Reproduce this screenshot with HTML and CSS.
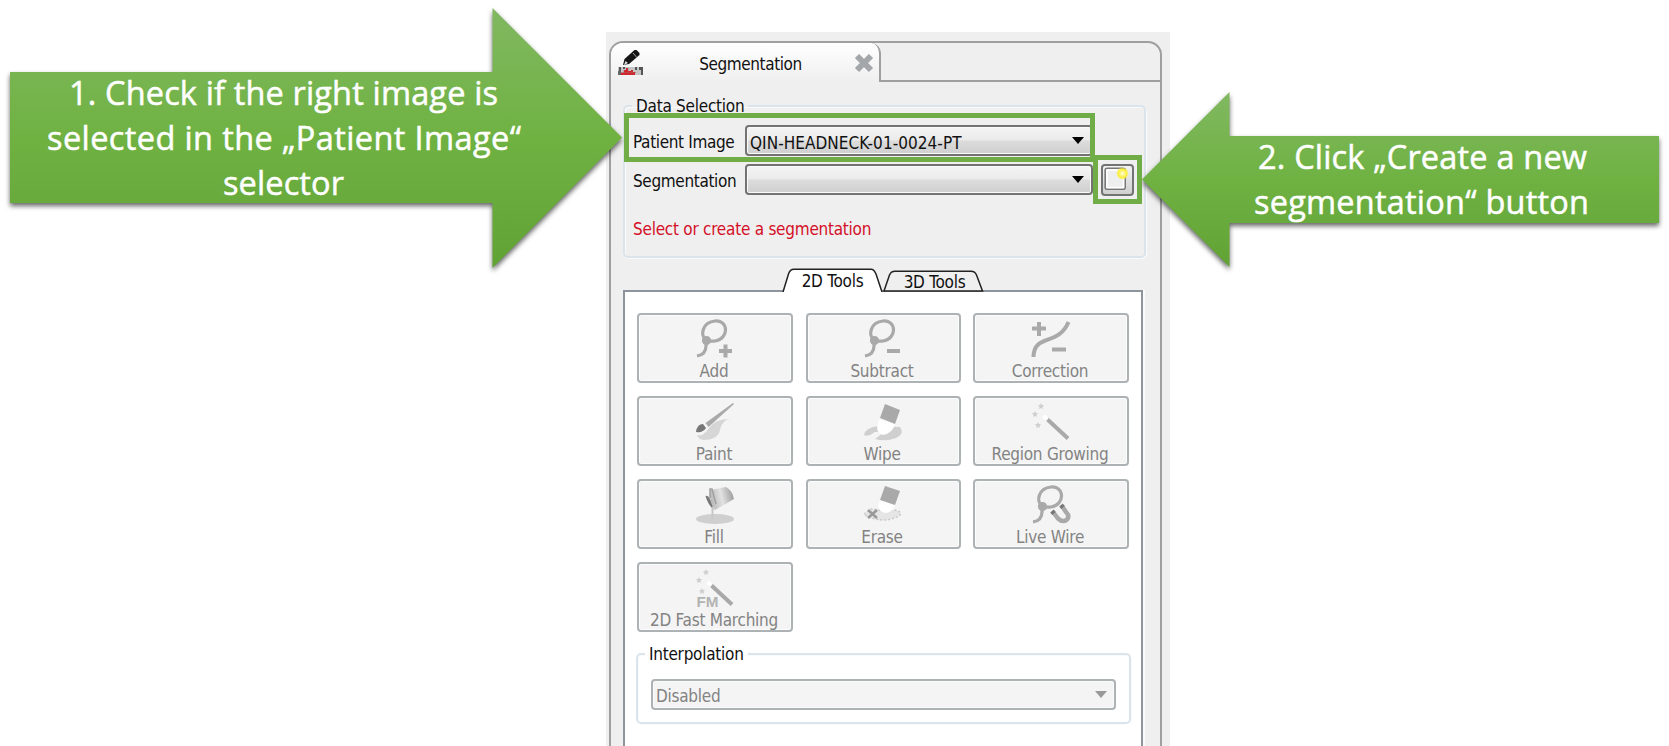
FILE: index.html
```html
<!DOCTYPE html>
<html lang="en">
<head>
<meta charset="utf-8">
<title>Segmentation</title>
<link rel="stylesheet" href="styles.css">
</head>
<body>
<main class="page">
  <section class="window">
    <div class="dock">
      <header class="dock-head">
        <div class="dock-tab">
          <svg class="seg-icon" viewBox="0 0 26 26" width="26" height="26">
            <path d="M0 17h25v8H0z" fill="#c4c4c4"/>
            <path d="M1 17h2v4H1zM5 17h2v2H5zM17 17h2v3h-2zM21 17h4v8h-2v-5h-2z" fill="#555"/>
            <path d="M0 21h3v4H0z" fill="#666"/>
            <path d="M3 25v-2h3v-3h2v-2h2v3h3v-1h2v2h2v3z" fill="#d8202a"/>
            <path d="M6 20v5M10 18v7M14 20v5M3 22.500h15" stroke="#a55" stroke-width=".6"/>
            <path d="M5 15l1.500-6L16.500 0h2l3 3v2L11 14z" fill="#151515"/>
            <path d="M6 15l1.500-4 2.500 2z" fill="#ddd"/>
            <path d="M15 3l3.500 4" stroke="#aaa" stroke-width="1"/>
          </svg>
          <span class="dock-title">Segmentation</span>
          <svg class="close" viewBox="0 0 20 20" width="20" height="20"><path d="M3 3l14 14M17 3L3 17" stroke="#a3a7aa" stroke-width="6"/></svg>
        </div>
        <div class="dock-rest"></div>
      </header>
      <div class="dock-body">
        <fieldset class="group data">
          <legend>Data Selection</legend>
          <div class="row"><label>Patient Image</label>
            <div class="combo"><span class="value">QIN-HEADNECK-01-0024-PT</span><i class="arrow"></i></div></div>
          <div class="row"><label>Segmentation</label>
            <div class="combo"><i class="arrow"></i></div>
            <button class="new"><svg viewBox="0 0 27 25" width="27" height="25"><defs><radialGradient id="glow"><stop offset="0" stop-color="#fffde0"/><stop offset=".35" stop-color="#fff680"/><stop offset=".65" stop-color="#fcee38"/><stop offset="1" stop-color="#fcee38" stop-opacity="0"/></radialGradient></defs><rect x="1.2" y="1.2" width="20" height="21" rx="2" fill="#eee" stroke="#777" stroke-width="1.6"/><rect x="3" y="3" width="16.500" height="17.500" fill="none" stroke="#fff" stroke-width="1.500"/><circle cx="18.500" cy="6.500" r="6.500" fill="url(#glow)"/></svg></button>
          </div>
          <p class="warn">Select or create a segmentation</p>
        </fieldset>
        <div class="tabs">
          <svg class="tab-shape" width="204" height="24" viewBox="0 0 204 24">
            <path d="M102 23L107.500 7Q109 3.200 113 3.200H189Q193 3.200 194.500 7L200.500 23z" fill="#efefef" stroke="#222" stroke-width="1.5"/>
            <path d="M1 24L6.500 6Q8 1.200 12 1.200H89Q92 1.200 94 6L100 24" fill="#fff" stroke="#222" stroke-width="1.5"/>
          </svg>
          <span class="tab tab-a">2D Tools</span><span class="tab tab-b">3D Tools</span>
        </div>
        <div class="pane">
          <div class="tools">
            <button class="tool"><svg viewBox="0 0 40 40"><g class="ln"><path d="M11 21C5 17 7 3 20 2C34 1 34 20 20 22C16 22.500 13 22 11 21V27C11 33 8 36 2 37"/><circle cx="11.500" cy="21.500" r="3" fill="#a9a9a9"/><path class="thick" d="M24 32h13M30.500 25.500v13"/></g></svg><span>Add</span></button>
            <button class="tool"><svg viewBox="0 0 40 40"><g class="ln"><path d="M11 21C5 17 7 3 20 2C34 1 34 20 20 22C16 22.500 13 22 11 21V27C11 33 8 36 2 37"/><circle cx="11.500" cy="21.500" r="3" fill="#a9a9a9"/><path class="thick" d="M24 32h13"/></g></svg><span>Subtract</span></button>
            <button class="tool"><svg viewBox="0 0 40 40"><g class="ln"><path class="curve" d="M2.500 38C3 14 27 28 37.500 3"/><path class="thick" d="M1 9.500h14M8 3v14M21 30.500h14"/></g></svg><span>Correction</span></button>
            <button class="tool"><svg viewBox="0 0 40 40"><path d="M2 33Q8 35 14 26T35 17Q27 18 25 28T8 38Q3 37 2 33z" fill="#d6d6d6"/><path d="M10.500 21L38 1 39 2 13.500 25z" fill="#a9a9a9"/><path d="M1 30Q2 22 8 22L11 26Q8 31 1 30z" fill="#777"/></svg><span>Paint</span></button>
            <button class="tool"><svg viewBox="0 0 40 40"><path d="M1 33Q2 26 15 24L37 25Q42 32 33 36Q23 40 12 37L20 31Q12 28 9 32Q4 35 1 33z" fill="#cfcfcf"/><path d="M17 17L32 22Q30 31 20 33Q10 29 17 17z" fill="#fff"/><path d="M22 2L37 8 32 22 17 16z" fill="#a9a9a9"/></svg><span>Wipe</span></button>
            <button class="tool"><svg viewBox="0 0 40 40"><path d="M16 17L37 36.500" stroke="#a9a9a9" stroke-width="4"/><path d="M12.500 14l4 3.500" stroke="#fff" stroke-width="4"/><g class="stars"><path d="M0-3L1-1 3-1 1.500 1 2 3 0 2-2 3-1.500 1-3-1-1-1z" transform="translate(10 4)"/><path d="M0-3L1-1 3-1 1.500 1 2 3 0 2-2 3-1.500 1-3-1-1-1z" transform="translate(4 12)"/><path d="M0-3L1-1 3-1 1.500 1 2 3 0 2-2 3-1.500 1-3-1-1-1z" transform="translate(7 23)"/></g></svg><span>Region Growing</span></button>
            <button class="tool"><svg viewBox="0 0 40 40"><defs><linearGradient id="pail" x1="0" y1=".6" x2="1" y2=".4"><stop offset="0" stop-color="#b5b5b5"/><stop offset=".5" stop-color="#e2e2e2"/><stop offset="1" stop-color="#9c9c9c"/></linearGradient></defs><ellipse cx="20" cy="34" rx="19" ry="5" fill="#cfcfcf"/><path d="M15 5L31 2Q37 5 39 14L20 25Q14 16 15 5z" fill="url(#pail)"/><path d="M10.500 11Q13 10 15 14L19 25Q13 20 10.500 11z" fill="#777"/><path d="M15 13V4h2L21 19" fill="none" stroke="#a0a0a0" stroke-width="1.500"/><path d="M17.500 22v12" stroke="#c8c8c8" stroke-width="2"/></svg><span>Fill</span></button>
            <button class="tool"><svg viewBox="0 0 40 40"><path d="M1 29L8 24 17 25 31 25Q41 27 36 31Q25 37 12 34L5 32z" fill="#e5e5e5" stroke="#c8c8c8" stroke-width="1.500" stroke-dasharray="2 2"/><path d="M17 15L32 20Q31 27 22 28Q12 25 17 15z" fill="#fff"/><path d="M22 1L37 6 32 20 17 15z" fill="#a9a9a9"/><path d="M5 25l9 8M14 25l-9 8" stroke="#999" stroke-width="2.500"/></svg><span>Erase</span></button>
            <button class="tool"><svg viewBox="0 0 40 40"><g class="ln"><path d="M11 21C5 17 7 3 20 2C34 1 34 20 20 22C16 22.500 13 22 11 21V27C11 33 8 36 2 37"/><circle cx="11.500" cy="21.500" r="3" fill="#a9a9a9"/><path d="M22 27L27 33.500Q32 38 36 34.500Q39 31 35 27L31 21" stroke-width="4.500"/><path d="M21 26l2 2.500M30 20l2 2.500" stroke="#777" stroke-width="4.500"/></g></svg><span>Live Wire</span></button>
            <button class="tool"><svg viewBox="0 0 40 40"><path d="M16 17L37 36.500" stroke="#a9a9a9" stroke-width="4"/><path d="M12.500 14l4 3.500" stroke="#fff" stroke-width="4"/><g class="stars"><path d="M0-3L1-1 3-1 1.500 1 2 3 0 2-2 3-1.500 1-3-1-1-1z" transform="translate(11 4)"/><path d="M0-3L1-1 3-1 1.500 1 2 3 0 2-2 3-1.500 1-3-1-1-1z" transform="translate(4 12)"/><path d="M0-3L1-1 3-1 1.500 1 2 3 0 2-2 3-1.500 1-3-1-1-1z" transform="translate(7 23)"/></g><text x="1.500" y="38.500" class="fm" textLength="22" lengthAdjust="spacingAndGlyphs">FM</text></svg><span>2D Fast Marching</span></button>
          </div>
          <fieldset class="group interp">
            <legend>Interpolation</legend>
            <div class="combo off"><span>Disabled</span><i class="arrow"></i></div>
          </fieldset>
        </div>
      </div>
    </div>
  </section>
  <svg class="callouts" width="1669" height="746" viewBox="0 0 1669 746">
    <defs>
      <linearGradient id="green" x2="0" y2="1"><stop offset="0" stop-color="#81b861"/><stop offset=".5" stop-color="#6fb242"/><stop offset="1" stop-color="#61a235"/></linearGradient>
    </defs>
    <path class="shape" d="M10 72H492.500V8L622 137.500 492.500 268V203H10z"/>
    <path class="shape" d="M1659 136H1229.500V92L1142 179.500 1229.500 267V223H1659z"/>
    <rect class="mark" x="626.500" y="115.500" width="466" height="44"/>
    <rect class="mark" x="1095.500" y="157.500" width="44" height="44"/>
    <g class="note">
      <text x="69" y="105" textLength="429">1. Check if the right image is</text>
      <text x="47" y="150" textLength="474">selected in the „Patient Image“</text>
      <text x="223" y="195" textLength="121">selector</text>
      <text x="1258" y="169" textLength="329">2. Click „Create a new</text>
      <text x="1254" y="214" textLength="335">segmentation“ button</text>
    </g>
  </svg>
</main>
</body>
</html>
```
FILE: styles.css
```css
* { box-sizing: border-box; }
body { margin: 0; background: #fff; font: 17px/20px "DejaVu Sans Condensed", "DejaVu Sans", sans-serif; font-stretch: condensed; letter-spacing: -.25px; color: #111; }
button { font: inherit; letter-spacing: inherit; color: inherit; padding: 0; }
fieldset { margin: 0; min-width: 0; }
.page { position: relative; width: 1669px; height: 746px; overflow: hidden; display: flex; padding: 32px 0 0 606px; }
.window { width: 564px; height: 714px; background: #efefef; padding: 9px 8px 0 3px; }
.dock { height: 730px; border: 2px solid #9f9f9f; border-radius: 14px 14px 0 0; display: flex; flex-direction: column; }
.dock-head { height: 39px; flex: none; display: flex; }
.dock-tab { width: 270px; border-right: 2px solid #9f9f9f; border-radius: 12px 10px 0 0; background: linear-gradient(#fff, #efefef); display: flex; align-items: center; padding: 0 5px 0 7px; justify-content: space-between; }
.dock-title { padding: 2px 0 0 3px; letter-spacing: -.4px; }
.dock-rest { flex: 1; border-bottom: 2px solid #9f9f9f; }
.dock-body { flex: 1; padding: 14px 16px 0 12px; }
.group { border: 2px solid #dbe4eb; border-radius: 5px; box-shadow: inset 1px 1px #fafafa, 1px 1px #fafafa; }
.group legend { padding: 0 4px; line-height: 20px; }
.data { height: 162px; padding: 9px 0 0 8px; width: 523px; }
.data legend { margin-left: -1px; }
.row { display: flex; align-items: center; height: 31px; margin-bottom: 8px; }
.row label { width: 112px; padding-top: 3px; letter-spacing: -.35px; }
.value { padding-top: 1px; letter-spacing: .05px; }
.combo { width: 348px; height: 31px; border: 2px solid #737373; border-radius: 4px; background: linear-gradient(#f4f4f4, #ebebeb 48%, #dcdcdc 52%, #cfcfcf); box-shadow: inset 0 0 0 1px #fafafa; display: flex; align-items: center; padding: 3px 7px 0 3px; }
.arrow { margin: -3px 0 0 auto; border: 6px solid transparent; border-top: 7px solid #000; border-bottom: 0; }
.new { width: 33px; height: 32px; margin-left: 8px; border: 2px solid #737373; border-radius: 4px; background: linear-gradient(#f4f4f4, #ddd 60%, #d0d0d0); display: flex; align-items: center; justify-content: center; }
.warn { margin: 24px 0 0; color: #d40f28; }
.tabs { display: grid; grid-template-columns: 104px 100px; padding-left: 159px; height: 24px; margin-top: 10px; }
.tab-shape { grid-row: 1; grid-column: 1 / 3; z-index: 1; }
.tab { grid-row: 1; text-align: center; z-index: 2; }
.tab-a { grid-column: 1; padding: 3px 3px 0 0; }
.tab-b { grid-column: 2; padding: 4px 3px 0 0; }
.pane { width: 520px; height: 480px; margin-top: -2px; border: 2px solid #8e949b; background: #fff; padding: 21px 11px 0 12px; box-shadow: 2px 0 #fafafa; }
.tools { display: grid; grid-template-columns: 156px 155px 156px; column-gap: 12.5px; row-gap: 13px; }
.tool { height: 70px; border: 2px solid #adb2b5; border-radius: 4px; background: #f4f4f4; box-shadow: inset 0 0 0 1px #fcfcfc; color: #838383; display: flex; flex-direction: column; align-items: center; padding: 4px 0 0; }
.tool svg { width: 40px; height: 40px; flex: none; }
.tool span { margin-top: 2px; padding-right: 2px; }
.ln { fill: none; stroke: #a9a9a9; stroke-width: 3.2; }
.curve { stroke-width: 4; }
.thick { stroke-width: 4; }
.stars { fill: #cfcfcf; }
.fm { font: bold 15px "Liberation Sans", sans-serif; letter-spacing: 0; fill: #b3b3b3; }
.interp { margin-top: 11px; height: 81px; width: 495px; margin-left: -1px; padding: 15px 0 0 13px; }
.interp legend { margin-left: -6px; padding-top: 1px; }
.off { width: 465px; background: #f4f4f4; border-color: #adb2b5; color: #838383; }
.off .arrow { border-top-color: #999; }
.callouts { position: absolute; left: 0; top: 0; letter-spacing: 0; }
.shape { fill: url(#green); filter: drop-shadow(0 3px 2.500px rgba(0,0,0,.6)); }
.mark { fill: none; stroke: #70ad47; stroke-width: 5; }
.note { font: 32.5px "Open Sans", sans-serif; fill: #fff; stroke: #fff; stroke-width: .5; }
```
